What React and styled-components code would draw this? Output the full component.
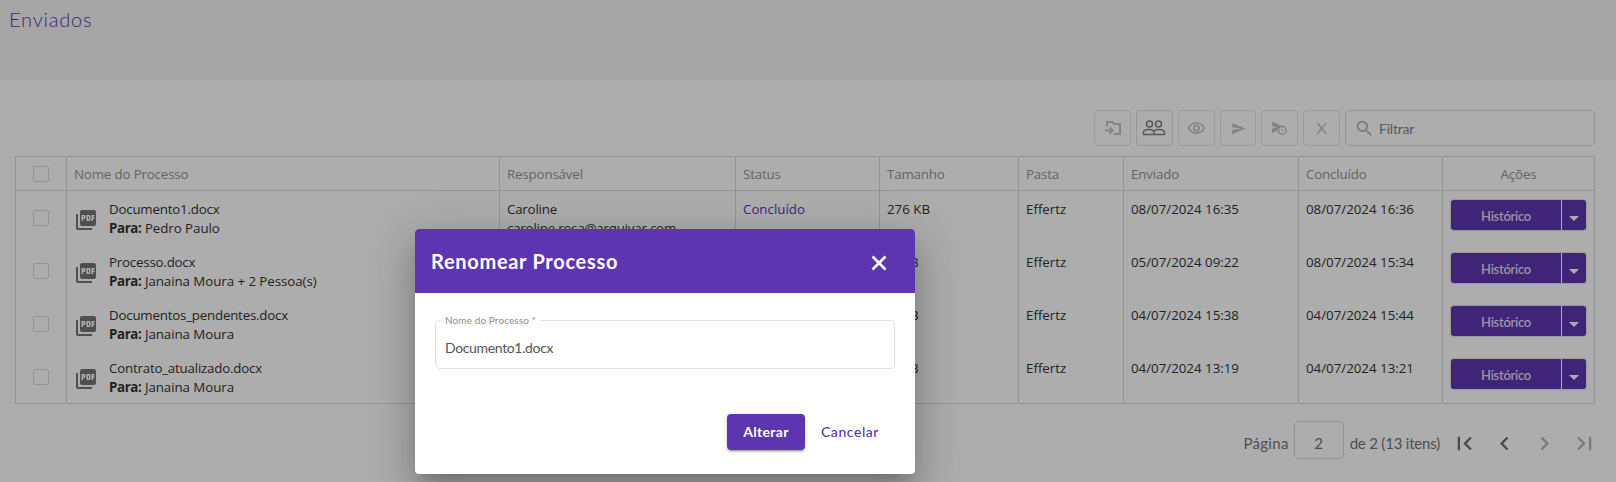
import React from "react";
import styled, { createGlobalStyle } from "styled-components";
import { MdPictureAsPdf, MdSearch, MdSend, MdFirstPage, MdChevronLeft, MdChevronRight, MdLastPage, MdArrowDropDown, MdOutlineVisibility } from "react-icons/md";

const ui = '"Open Sans", "Noto Sans", sans-serif';
const brand = 'Lato, "Open Sans", sans-serif';

const GlobalStyle = createGlobalStyle`
  *, *::before, *::after { box-sizing: border-box; }
  body { margin: 0; background: #fff; font-family: ${ui}; overflow: hidden; }
  button, input { font: inherit; margin: 0; padding: 0; }
`;

const Page = styled.div`
  height: 482px;
  position: relative;
  overflow: hidden;
  background: #fff;
`;
const Header = styled.header`
  height: 80px;
  padding: 7px 9px;
  background: #f5f5f5;
`;
const Title = styled.h1`
  margin: 0;
  font: 300 20px/24px ${brand};
  letter-spacing: 0.8px;
  color: #5e35b1;
`;
const Toolbar = styled.div`
  display: flex;
  justify-content: flex-end;
  gap: 5px;
  padding: 30px 21px 10px 0;
`;
const ToolButton = styled.button`
  width: 36.8px;
  height: 36px;
  display: flex;
  align-items: center;
  justify-content: center;
  background: transparent;
  border: 1px solid ${(p) => (p.$active ? "#e0e0e0" : "#e6e6e6")};
  border-radius: 4px;
  color: ${(p) => (p.$active ? "#828282" : "#c3c3c3")};
  font: 400 16px/18px ${brand};
`;
const Search = styled.label`
  width: 250px;
  height: 36px;
  display: flex;
  align-items: center;
  gap: 4px;
  padding-left: 8px;
  border: 1px solid #dbdbdb;
  border-radius: 5px;
  color: #b4b4b4;
`;
const SearchInput = styled.input`
  width: 180px;
  border: 0;
  outline: 0;
  padding-top: 2px;
  background: transparent;
  color: #757575;
  font: 400 14px/18px ${brand};
  letter-spacing: -0.2px;
  &::placeholder { color: #858585; opacity: 1; }
`;

const Table = styled.table`
  width: 1580px;
  margin-left: 15px;
  table-layout: fixed;
  border-collapse: separate;
  border-spacing: 0;
  border: 1px solid #dbdbdb;
  font-size: 13.3px;
  line-height: 19px;
  color: #333;
`;
const HeadCell = styled.th`
  height: 34px;
  padding: 2px 0 0 7px;
  border-bottom: 1px solid #dbdbdb;
  border-right: 1px solid #dbdbdb;
  text-align: ${(p) => (p.$center ? "center" : "left")};
  font-weight: 400;
  letter-spacing: -0.15px;
  color: #959595;
  &:last-child { border-right: 0; padding-left: 0; }
`;
const Cell = styled.td`
  height: 53px;
  padding: 9px 0 0 7px;
  vertical-align: top;
  white-space: nowrap;
  border-right: 1px solid #dbdbdb;
  letter-spacing: ${(p) => p.$ls || 0}px;
  color: ${(p) => (p.$link ? "#5e35b1" : "#333")};
  &:last-child { border-right: 0; }
`;
const CheckHead = styled(HeadCell)`
  padding: 0 0 0 17px;
`;
const CheckCell = styled(Cell)`
  padding: 19px 0 0 17px;
`;
const Checkbox = styled.span`
  display: block;
  width: 16px;
  height: 16px;
  border: 1px solid #dadada;
  border-radius: 2px;
`;
const Doc = styled.div`
  display: flex;
  gap: 11px;
  letter-spacing: -0.05px;
  svg { margin-top: 8px; color: #757575; }
`;
const DocName = styled.div`
  letter-spacing: -0.2px;
`;
const Para = styled.b`
  font-weight: 700;
  letter-spacing: -0.35px;
`;
const Split = styled.div`
  display: flex;
  width: 135px;
  height: 30px;
  margin-left: 1px;
  border-radius: 3px;
  background: #5e35b1;
  color: #fff;
  box-shadow: 0 0 1px 1px #e3e3e3;
`;
const SplitMain = styled.button`
  flex: 1;
  border: 0;
  border-right: 1px solid #fff;
  background: transparent;
  color: #e2dbf0;
  font: 600 13px/18px ${brand};
  letter-spacing: -0.3px;
  padding-top: 2px;
`;
const SplitArrow = styled.button`
  width: 24px;
  border: 0;
  display: flex;
  align-items: center;
  justify-content: center;
  padding-top: 5px;
  background: transparent;
  color: #fff;
`;

const Pager = styled.div`
  display: flex;
  align-items: center;
  justify-content: flex-end;
  height: 38px;
  margin-top: 17px;
  padding-right: 18px;
  font: 400 15px/20px ${brand};
  color: #757575;
`;
const PagerText = styled.span`
  padding-top: 5px;
  letter-spacing: ${(p) => p.$ls}px;
`;
const PageInput = styled.span`
  width: 50px;
  height: 38px;
  margin: 0 6px 0 5px;
  padding-top: 5px;
  border: 1px solid #dbdbdb;
  border-radius: 5px;
  display: flex;
  align-items: center;
  justify-content: center;
`;
const PagerButton = styled.button`
  display: flex;
  border: 0;
  padding-top: 7px;
  background: transparent;
  margin-left: ${(p) => p.$gap}px;
  color: ${(p) => (p.$off ? "#b5b5b5" : "#6c6c6c")};
`;

const Backdrop = styled.div`
  position: absolute;
  inset: 0;
  display: flex;
  justify-content: center;
  align-items: flex-start;
  padding: 229px 286px 0 0;
  background: rgba(0, 0, 0, 0.32);
`;
const Dialog = styled.section`
  width: 500px;
  height: 245px;
  border-radius: 4px;
  overflow: hidden;
  background: #fff;
  box-shadow: 0 11px 15px -7px rgba(0,0,0,.2), 0 24px 38px 3px rgba(0,0,0,.14), 0 9px 46px 8px rgba(0,0,0,.12);
`;
const DialogHead = styled.div`
  height: 64px;
  display: flex;
  align-items: center;
  justify-content: space-between;
  padding: 0 24px 0 16px;
  background: #5e35b1;
  color: #fff;
`;
const DialogTitle = styled.h2`
  margin: 0;
  font: 700 20px/24px ${brand};
  letter-spacing: 0.7px;
`;
const CloseButton = styled.button`
  display: flex;
  border: 0;
  margin-top: 4px;
  background: transparent;
  color: #fff;
`;
const Field = styled.fieldset`
  min-width: 0;
  width: 460px;
  height: 55px;
  margin: 21px 20px 0;
  padding: 0 9px;
  border: 1px solid #dedede;
  border-radius: 5px;
`;
const Legend = styled.legend`
  margin-left: -4px;
  padding: 0 5px 0 4px;
  font: 400 10px/12px ${brand};
  letter-spacing: 0.1px;
  color: #8b8b8b;
`;
const FieldInput = styled.input`
  width: 400px;
  display: block;
  border: 0;
  outline: 0;
  margin-top: 12px;
  background: transparent;
  color: #555;
  font: 400 14px/20px ${brand};
  letter-spacing: -0.35px;
`;
const Actions = styled.div`
  display: flex;
  justify-content: flex-end;
  gap: 16px;
  margin-top: 45px;
  padding-right: 36px;
`;
const Primary = styled.button`
  width: 78px;
  height: 36px;
  border: 0;
  border-radius: 4px;
  background: #5e35b1;
  color: #fff;
  font: 700 14px/20px ${brand};
  letter-spacing: 0.3px;
  box-shadow: 0 3px 1px -2px rgba(0,0,0,.2), 0 2px 2px rgba(0,0,0,.14), 0 1px 5px rgba(0,0,0,.12);
`;
const TextButton = styled.button`
  height: 36px;
  border: 0;
  background: transparent;
  color: #5e35b1;
  font: 500 14px/20px ${brand};
  letter-spacing: 0.55px;
`;

const Cross = () => (
  <svg width="24" height="24" viewBox="0 0 24 24" fill="none" stroke="currentColor" strokeWidth="2.600">
    <path d="M5.500 5.500l13 13M18.500 5.500l-13 13" />
  </svg>
);
const FolderMove = () => (
  <svg width="18" height="18" viewBox="0 0 18 18" fill="none" stroke="currentColor" strokeWidth="2">
    <path d="M3 7.500V3h5l2 2h6v10H10" />
    <path d="M1 11.500h7M5.500 8.500l3 3-3 3" />
  </svg>
);
const People = () => (
  <svg width="24" height="16" viewBox="0 0 24 16" fill="none" stroke="currentColor" strokeWidth="1.500">
    <circle cx="7.500" cy="4" r="3" />
    <circle cx="16.500" cy="4" r="3" />
    <path d="M1.500 14.500v-2c0-2 3-3 5.500-3s5 1 5 3v2zM12 14.500v-2c0-2 2.500-3 5-3s5.500 1 5.500 3v2z" />
  </svg>
);
const SendLater = () => (
  <svg width="17" height="16" viewBox="0 0 17 16" fill="none">
    <path d="M1 1.500L13 7H9.500C7.500 7.600 6 9 5.700 11L1 13V8.500L6 7.200 1 6z" fill="currentColor" />
    <circle cx="11.200" cy="10.300" r="3.900" stroke="currentColor" strokeWidth="1.600" />
    <circle cx="11.200" cy="10.300" r="1" fill="currentColor" />
  </svg>
);

const columns = ["Responsável", "Status", "Tamanho", "Pasta", "Enviado", "Concluído"];
const widths = [51, 433, 236, 144, 139, 105, 175, 144, 151];
const rows = [
  ["Documento1.docx", "Pedro Paulo", "276 KB", "08/07/2024 16:35", "08/07/2024 16:36"],
  ["Processo.docx", "Janaina Moura + 2 Pessoa(s)", "1 MB", "05/07/2024 09:22", "08/07/2024 15:34"],
  ["Documentos_pendentes.docx", "Janaina Moura", "1 MB", "04/07/2024 15:38", "04/07/2024 15:44"],
  ["Contrato_atualizado.docx", "Janaina Moura", "1 MB", "04/07/2024 13:19", "04/07/2024 13:21"],
];

export default function App() {
  return (
    <Page>
      <GlobalStyle />
      <Header><Title>Enviados</Title></Header>
      <Toolbar>
        <ToolButton><FolderMove /></ToolButton>
        <ToolButton $active><People /></ToolButton>
        <ToolButton><MdOutlineVisibility size={19} /></ToolButton>
        <ToolButton><MdSend size={15} /></ToolButton>
        <ToolButton><SendLater /></ToolButton>
        <ToolButton>X</ToolButton>
        <Search><MdSearch size={21} /><SearchInput placeholder="Filtrar" /></Search>
      </Toolbar>
      <Table>
        <colgroup>{widths.map((w, i) => <col key={i} width={w} />)}</colgroup>
        <thead>
          <tr>
            <CheckHead><Checkbox /></CheckHead>
            <HeadCell>Nome do Processo</HeadCell>
            {columns.map((c) => <HeadCell key={c}>{c}</HeadCell>)}
            <HeadCell $center>Ações</HeadCell>
          </tr>
        </thead>
        <tbody>
          {rows.map(([name, to, size, sent, done], i) => (
            <tr key={name}>
              <CheckCell><Checkbox /></CheckCell>
              <Cell><Doc><MdPictureAsPdf size={24} /><div><DocName>{name}</DocName><Para>Para:</Para> {to}</div></Doc></Cell>
              <Cell $ls={-0.2}>{i === 0 && <>Caroline<br />caroline.rosa@arquivar.com</>}</Cell>
              <Cell $link>{i === 0 && "Concluído"}</Cell>
              <Cell>{size}</Cell>
              <Cell>Effertz</Cell>
              <Cell>{sent}</Cell>
              <Cell>{done}</Cell>
              <Cell><Split><SplitMain>Histórico</SplitMain><SplitArrow><MdArrowDropDown size={24} /></SplitArrow></Split></Cell>
            </tr>
          ))}
        </tbody>
      </Table>
      <Pager>
        <PagerText $ls={0.3}>Página</PagerText>
        <PageInput>2</PageInput>
        <PagerText $ls={-0.2}>de 2 (13 itens)</PagerText>
        <PagerButton $gap={11}><MdFirstPage size={27} /></PagerButton>
        <PagerButton $gap={13}><MdChevronLeft size={27} /></PagerButton>
        <PagerButton $gap={13} $off><MdChevronRight size={27} /></PagerButton>
        <PagerButton $gap={13} $off><MdLastPage size={27} /></PagerButton>
      </Pager>
      <Backdrop>
        <Dialog>
          <DialogHead><DialogTitle>Renomear Processo</DialogTitle><CloseButton><Cross /></CloseButton></DialogHead>
          <Field><Legend>Nome do Processo *</Legend><FieldInput defaultValue="Documento1.docx" /></Field>
          <Actions><Primary>Alterar</Primary><TextButton>Cancelar</TextButton></Actions>
        </Dialog>
      </Backdrop>
    </Page>
  );
}
